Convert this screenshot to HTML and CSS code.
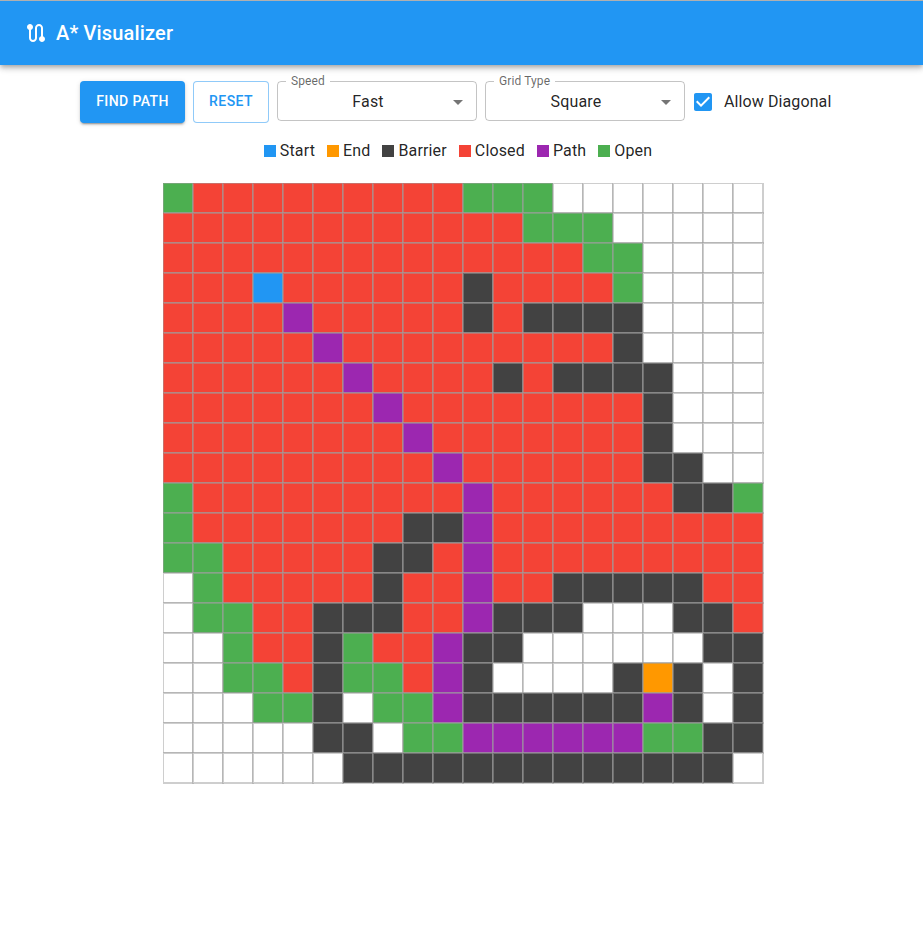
FILE: index.html
```html
<!DOCTYPE html>
<html lang="en">
<head>
<meta charset="utf-8">
<title>A* Visualizer</title>
<link rel="stylesheet" href="styles.css">
</head>
<body>
<header class="appbar">
  <svg class="logo" viewBox="0 0 24 24" width="24" height="24"><path d="M19 15.18V7c0-2.21-1.79-4-4-4s-4 1.79-4 4v10c0 1.1-.9 2-2 2s-2-.9-2-2V8.82C8.16 8.4 9 7.3 9 6c0-1.66-1.34-3-3-3S3 4.34 3 6c0 1.3.84 2.4 2 2.82V17c0 2.21 1.79 4 4 4s4-1.79 4-4V7c0-1.1.9-2 2-2s2 .9 2 2v8.18c-1.16.41-2 1.51-2 2.82 0 1.66 1.34 3 3 3s3-1.34 3-3c0-1.3-.84-2.4-2-2.82z"/></svg>
  <h1 class="title">A* Visualizer</h1>
</header>
<main>
  <div class="controls">
    <button class="btn btn-contained">Find Path</button>
    <button class="btn btn-outlined">Reset</button>
    <fieldset class="select">
      <legend>Speed</legend>
      <span class="value">Fast</span>
      <svg class="arrow" viewBox="0 0 24 24" width="24" height="24"><path d="M7 10l5 5 5-5z"/></svg>
    </fieldset>
    <fieldset class="select">
      <legend>Grid Type</legend>
      <span class="value">Square</span>
      <svg class="arrow" viewBox="0 0 24 24" width="24" height="24"><path d="M7 10l5 5 5-5z"/></svg>
    </fieldset>
    <label class="check">
      <svg viewBox="0 0 24 24" width="24" height="24"><path d="M19 3H5c-1.11 0-2 .9-2 2v14c0 1.1.89 2 2 2h14c1.11 0 2-.9 2-2V5c0-1.1-.89-2-2-2zm-9 14l-5-5 1.41-1.41L10 14.17l7.59-7.59L19 8l-9 9z"/></svg>
      <span>Allow Diagonal</span>
    </label>
  </div>
  <div class="legend">
    <span class="key"><i class="swatch start"></i>Start</span>
    <span class="key"><i class="swatch end"></i>End</span>
    <span class="key"><i class="swatch barrier"></i>Barrier</span>
    <span class="key"><i class="swatch closed"></i>Closed</span>
    <span class="key"><i class="swatch path"></i>Path</span>
    <span class="key"><i class="swatch open"></i>Open</span>
  </div>
  <svg class="grid" id="grid" width="601" height="601"></svg>
</main>
<script src="grid.js"></script>
</body>
</html>
```
FILE: styles.css
```css
* { box-sizing: border-box; }
body {
  margin: 0;
  background: #fff;
  color: rgba(0, 0, 0, .87);
  font: 400 16px/24px Roboto, "Liberation Sans", sans-serif;
  border-top: 1px solid #b0b0b0;
}
.appbar {
  display: flex;
  align-items: center;
  gap: 8px;
  height: 64px;
  padding: 0 24px;
  background: #2196f3;
  color: #fff;
  box-shadow: 0 2px 4px -1px rgba(0, 0, 0, .2), 0 4px 5px 0 rgba(0, 0, 0, .14), 0 1px 10px 0 rgba(0, 0, 0, .12);
}
.logo { fill: #fff; }
.title {
  margin: 0;
  font-size: 20px;
  font-weight: 500;
  line-height: 32px;
  letter-spacing: .15px;
}
.controls {
  display: flex;
  gap: 8px;
  height: 42px;
  margin: 16px 0 0 80px;
}
.btn {
  height: 42px;
  padding: 0 16px 2px;
  border: 0;
  border-radius: 4px;
  font: 500 14px/24px Roboto, "Liberation Sans", sans-serif;
  letter-spacing: .4px;
  text-transform: uppercase;
}
.btn-contained {
  width: 105px;
  background: #2196f3;
  color: #fff;
  box-shadow: 0 3px 1px -2px rgba(0, 0, 0, .2), 0 2px 2px 0 rgba(0, 0, 0, .14), 0 1px 5px 0 rgba(0, 0, 0, .12);
}
.btn-outlined {
  width: 76px;
  padding: 0 15px 2px;
  border: 1px solid rgba(33, 150, 243, .5);
  background: #fff;
  color: #2196f3;
}
.select {
  display: flex;
  align-items: center;
  width: 200px;
  height: 46px;
  margin: -6px 0 0;
  padding: 0 6px 4px 8px;
  border: 1px solid rgba(0, 0, 0, .23);
  border-radius: 4px;
}
.select legend {
  height: 12px;
  padding: 0 5px;
  color: rgba(0, 0, 0, .6);
  font-size: 12px;
  line-height: 12px;
  letter-spacing: .11px;
}
.value {
  flex: 1;
  padding-left: 4px;
  text-align: center;
  letter-spacing: .15px;
}
.arrow { fill: rgba(0, 0, 0, .54); }
.check {
  display: flex;
  align-items: center;
  gap: 9px;
  height: 42px;
  margin-left: -2px;
  letter-spacing: .1px;
}
.check svg { fill: #2196f3; }
.legend {
  display: flex;
  justify-content: center;
  gap: 12px;
  margin-top: 16px;
  padding-right: 7px;
  letter-spacing: .15px;
}
.key {
  display: flex;
  align-items: center;
  gap: 4px;
}
.swatch {
  width: 12px;
  height: 12px;
}
.start { background: #2196f3; }
.end { background: #ff9800; }
.barrier { background: #424242; }
.closed { background: #f44336; }
.path { background: #9c27b0; }
.open { background: #4caf50; }
.grid {
  display: block;
  margin: 20px 0 0 163px;
}
.cell {
  stroke: #9e9e9e;
  stroke-width: 2px;
  stroke-opacity: .5;
}
```
FILE: grid.js
```javascript
// Run-length encoded rows: G open, R closed, W empty, B barrier, P path, S start, E end.
const rows = [
  "G1 R9 G3 W7",
  "R12 G3 W5",
  "R14 G2 W4",
  "R3 S1 R6 B1 R4 G1 W4",
  "R4 P1 R5 B1 R1 B4 W4",
  "R5 P1 R9 B1 W4",
  "R6 P1 R4 B1 R1 B4 W3",
  "R7 P1 R8 B1 W3",
  "R8 P1 R7 B1 W3",
  "R9 P1 R6 B2 W2",
  "G1 R9 P1 R6 B2 G1",
  "G1 R7 B2 P1 R9",
  "G2 R5 B2 R1 P1 R9",
  "W1 G1 R5 B1 R2 P1 R2 B5 R2",
  "W1 G2 R2 B3 R2 P1 B3 W3 B2 R1",
  "W2 G1 R2 B1 G1 R2 P1 B2 W6 B2",
  "W2 G2 R1 B1 G2 R1 P1 B1 W4 B1 E1 B1 W1 B1",
  "W3 G2 B1 W1 G2 P1 B6 P1 B1 W1 B1",
  "W5 B2 W1 G2 P6 G2 B2",
  "W6 B13 W1"
];
const colors = {
  G: "#4caf50", R: "#f44336", W: "#ffffff", B: "#424242",
  P: "#9c27b0", S: "#2196f3", E: "#ff9800"
};
const size = 30;
const grid = document.getElementById("grid");
rows.forEach((row, y) => {
  let x = 0;
  row.split(" ").forEach(run => {
    for (let n = Number(run.slice(1)); n > 0; n--, x++) {
      const cell = document.createElementNS("http://www.w3.org/2000/svg", "rect");
      cell.setAttribute("class", "cell");
      cell.setAttribute("x", x * size);
      cell.setAttribute("y", y * size);
      cell.setAttribute("width", size);
      cell.setAttribute("height", size);
      cell.setAttribute("fill", colors[run[0]]);
      grid.appendChild(cell);
    }
  });
});
```
